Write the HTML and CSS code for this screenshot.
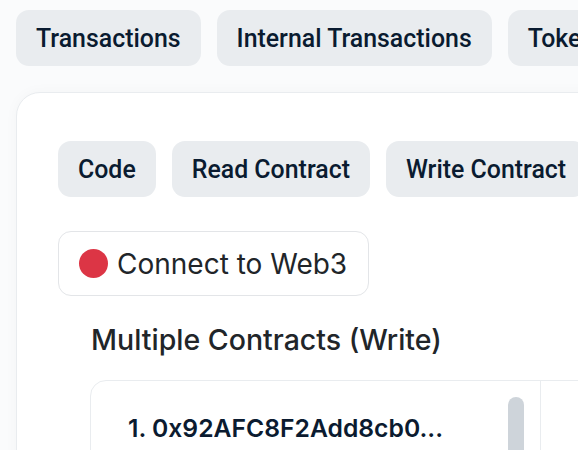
FILE: index.html
```html
<!DOCTYPE html>
<html lang="en">
<head>
<meta charset="utf-8">
<title>Contract</title>
<link rel="stylesheet" href="styles.css">
</head>
<body>
  <nav class="tabs">
    <span class="tab">Transactions</span>
    <span class="tab">Internal Transactions</span>
    <span class="tab">Token Transfers</span>
    <span class="tab">Contract</span>
  </nav>
  <section class="card">
    <nav class="tabs tabs-inner">
      <span class="tab">Code</span>
      <span class="tab">Read Contract</span>
      <span class="tab">Write Contract</span>
      <span class="tab">Read as Proxy</span>
    </nav>
    <button class="connect"><span class="dot"></span>Connect to Web3</button>
    <h2 class="heading">Multiple Contracts (Write)</h2>
    <div class="panel">
      <div class="list">
        <div class="item">1. 0x92AFC8F2Add8cb0...</div>
        <div class="thumb"></div>
      </div>
      <div class="detail"></div>
    </div>
  </section>
</body>
</html>
```

FILE: styles.css
```css
html, body {
  margin: 0;
  padding: 0;
}
body {
  background: #fafbfc;
  overflow: hidden;
  width: 578px;
  height: 450px;
}
.tabs {
  display: flex;
  gap: 16px;
  padding: 10px 0 0 16px;
  white-space: nowrap;
}
.tab {
  flex: none;
  display: flex;
  align-items: center;
  height: 56px;
  padding: 0 20px;
  border-radius: 13px;
  background: #e9ecef;
  color: #0a1b30;
  font-family: Roboto, "Liberation Sans", sans-serif;
  font-weight: 500;
  font-size: 24.9px;
}
.card {
  margin: 26px 0 0 16px;
  width: 760px;
  height: 420px;
  box-sizing: border-box;
  background: #fff;
  border: 1.5px solid #e9ecef;
  border-radius: 24px;
  box-shadow: 0 0 14px rgba(0, 0, 0, 0.03);
  padding: 48px 0 0 41px;
}
.tabs-inner {
  padding: 0;
}
.connect {
  margin-top: 34px;
  display: flex;
  align-items: center;
  gap: 9px;
  width: 311px;
  height: 65px;
  box-sizing: border-box;
  padding: 0 0 0 20px;
  background: #fff;
  border: 1.5px solid #e3e5e8;
  border-radius: 13px;
  font-family: Inter, "Noto Sans", sans-serif;
  font-size: 28px;
  font-weight: 400;
  color: #212529;
}
.dot {
  width: 29px;
  height: 29px;
  border-radius: 50%;
  background: #dc3545;
  flex: none;
}
.heading {
  margin: 24px 0 0 33px;
  font-family: Inter, "Noto Sans", sans-serif;
  font-size: 28.5px;
  font-weight: 500;
  line-height: 40px;
  color: #212529;
}
.panel {
  margin: 20px 0 0 32px;
  display: flex;
  border: 1.5px solid #e9ecef;
  border-radius: 16px;
  height: 200px;
}
.list {
  width: 450px;
  flex: none;
  border-right: 1.5px solid #e9ecef;
  display: flex;
  justify-content: space-between;
  padding: 16px 16px 0 37px;
  box-sizing: border-box;
}
.item {
  margin-top: 16px;
  font-family: Inter, "Noto Sans", sans-serif;
  font-size: 24.7px;
  font-weight: 600;
  color: #0b1b30;
}
.thumb {
  width: 16px;
  height: 120px;
  border-radius: 8px;
  background: #ced4da;
}
.detail {
  flex: 1;
}
```
